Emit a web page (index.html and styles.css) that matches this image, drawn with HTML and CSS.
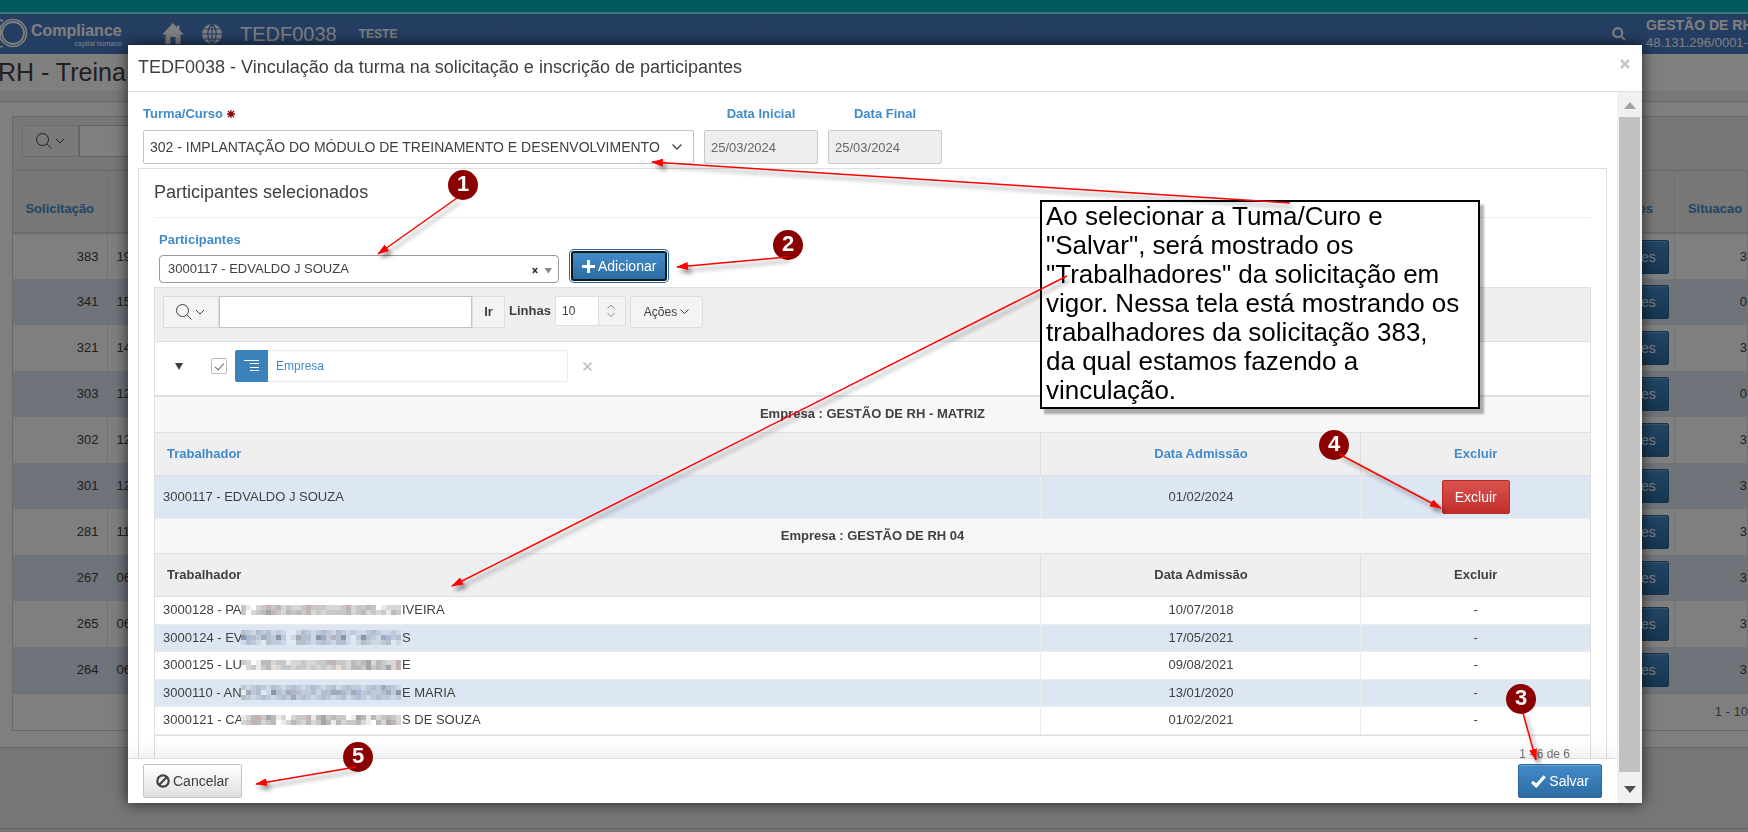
FILE: index.html
```html
<!DOCTYPE html>
<html lang="pt-BR">
<head>
<meta charset="utf-8">
<title>TEDF0038 - Vinculação da turma</title>
<link rel="stylesheet" href="styles.css">
</head>
<body>
<div class="page">
  <div class="strip"></div>
  <header class="nav">
    <div class="brand">
      <svg class="rings" width="28" height="32" viewBox="0 0 28 32" fill="none" stroke="#fff"><circle cx="13" cy="15" r="13.5" stroke-width="1.6"/><circle cx="13" cy="15" r="11" stroke-width="1.8"/><path d="M-1 2a15 15 0 0 1 4 1M-1 6c2 3 2 14 0 18M-1 29c1 0 3 0 4-1" stroke-width="1.6"/></svg>
      <span class="brand-text"><b>Compliance</b><small>capital humano</small></span>
    </div>
    <a href="#" class="nav-icon home" aria-label="Início"><svg width="22" height="22" viewBox="0 0 22 22" fill="#fff"><path d="M11 0 0 11.500h3.500V21h5v-7h5v7h5v-9.500H22L17.500 7V2.500h-2.500v2z"/></svg></a>
    <a href="#" class="nav-icon" aria-label="Idioma"><svg width="20" height="20" viewBox="0 0 20 20"><circle cx="10" cy="10" r="10" fill="#fff"/><path d="M0 10h20M1.500 5h17M1.500 15h17M10 0v20M10 0C4.500 4 4.500 16 10 20M10 0c5.500 4 5.500 16 0 20" fill="none" stroke="#4a7cc6" stroke-width="1.200"/></svg></a>
    <span class="nav-code">TEDF0038</span>
    <span class="nav-env">TESTE</span>
    <svg class="nav-search" width="14" height="14" viewBox="0 0 14 14" fill="none" stroke="#fff" stroke-width="2.200"><circle cx="5.700" cy="5.700" r="4.500"/><path d="m9 9 4 4"/></svg>
    <div class="nav-user"><b>GESTÃO DE RH</b><span>48.131.296/0001-00</span></div>
  </header>
  <h1 class="page-title">RH - Treina</h1>
  <div class="page-gap"></div>
  <section class="page-region">
    <div class="back">
      <div class="back-bar">
        <button class="find" type="button" aria-label="Pesquisar colunas"><svg width="30" height="17" viewBox="0 0 30 17" fill="none" stroke="#404040"><circle cx="6.500" cy="6.500" r="6"/><path d="m11 11 4.500 4.500M20 6l4 4 4-4"/></svg></button>
        <input class="find-text" type="text" aria-label="Pesquisa">
      </div>
      <table class="back-table">
        <colgroup><col class="b1"><col><col class="b3"><col class="b4"></colgroup>
        <thead><tr><th>Solicitação</th><th></th><th class="end">Trabalhadores</th><th class="state">Situacao</th></tr></thead>
        <tbody>
          <tr><td>383</td><td>19</td><td><button type="button" class="btn blue">Trabalhadores</button></td><td>3</td></tr>
          <tr><td>341</td><td>15</td><td><button type="button" class="btn blue">Trabalhadores</button></td><td>0</td></tr>
          <tr><td>321</td><td>14</td><td><button type="button" class="btn blue">Trabalhadores</button></td><td>3</td></tr>
          <tr><td>303</td><td>12</td><td><button type="button" class="btn blue">Trabalhadores</button></td><td>0</td></tr>
          <tr><td>302</td><td>12</td><td><button type="button" class="btn blue">Trabalhadores</button></td><td>3</td></tr>
          <tr><td>301</td><td>12</td><td><button type="button" class="btn blue">Trabalhadores</button></td><td>3</td></tr>
          <tr><td>281</td><td>11</td><td><button type="button" class="btn blue">Trabalhadores</button></td><td>3</td></tr>
          <tr><td>267</td><td>06</td><td><button type="button" class="btn blue">Trabalhadores</button></td><td>3</td></tr>
          <tr><td>265</td><td>06</td><td><button type="button" class="btn blue">Trabalhadores</button></td><td>3</td></tr>
          <tr><td>264</td><td>06</td><td><button type="button" class="btn blue">Trabalhadores</button></td><td>3</td></tr>
        </tbody>
      </table>
      <div class="back-pager">1 - 10</div>
    </div>
  </section>
  <footer class="page-foot"></footer>
</div>

<div class="overlay">
  <div class="modal" role="dialog" aria-labelledby="dlg-title">
    <div class="modal-head">
      <h2 id="dlg-title">TEDF0038 - Vinculação da turma na solicitação e inscrição de participantes</h2>
      <button class="close" type="button" aria-label="Fechar"><svg width="10" height="10" viewBox="0 0 10 10" stroke="#c8c8c8" stroke-width="2.600"><path d="m1 1 8 8M9 1 1 9"/></svg></button>
    </div>
    <div class="modal-main">
      <div class="modal-col">
        <div class="content">
          <div class="fields">
            <div class="field course">
              <label for="turma">Turma/Curso <svg width="8" height="8" viewBox="0 0 8 8" stroke="#8b0000" stroke-width="1.300"><path d="M4 0v8M0 4h8M1 1l6 6M7 1 1 7"/></svg></label>
              <div class="select-wrap">
                <select id="turma"><option>302 - IMPLANTAÇÃO DO MÓDULO DE TREINAMENTO E DESENVOLVIMENTO</option></select>
                <svg class="chev" width="10" height="6" viewBox="0 0 10 6" fill="none" stroke="#404040" stroke-width="1.300"><path d="m.5.5 4.500 4.500L9.500.5"/></svg>
              </div>
            </div>
            <div class="field date"><label for="di">Data Inicial</label><input id="di" type="text" value="25/03/2024" readonly></div>
            <div class="field date"><label for="df">Data Final</label><input id="df" type="text" value="25/03/2024" readonly></div>
          </div>
          <section class="region">
            <h3>Participantes selecionados</h3>
            <div class="adder">
              <div class="person">
                <label for="part">Participantes</label>
                <div class="select-wrap">
                  <select id="part"><option>3000117 - EDVALDO J SOUZA</option></select>
                  <svg class="marks" width="20" height="7" viewBox="0 0 20 7"><path d="m.8 1 4.400 5M5.200 1 .8 6" stroke="#333" stroke-width="1.600"/><path d="M12.500 1h7.500l-3.700 5.500z" fill="#888"/></svg>
                </div>
              </div>
              <button type="button" class="btn blue add"><svg width="13" height="13" viewBox="0 0 13 13" fill="#fff"><path d="M5 0h3v5h5v3H8v5H5V8H0V5h5z"/></svg>Adicionar</button>
            </div>
            <div class="report">
              <div class="toolbar">
                <button class="find" type="button" aria-label="Selecionar colunas"><svg width="30" height="17" viewBox="0 0 30 17" fill="none" stroke="#404040"><circle cx="6.500" cy="6.500" r="6"/><path d="m11 11 4.500 4.500M20 6l4 4 4-4"/></svg></button>
                <input class="find-text" type="text" aria-label="Pesquisar">
                <button class="go" type="button">Ir</button>
                <label class="lines" for="linhas">Linhas</label>
                <div class="select-wrap rows-sel">
                  <select id="linhas"><option>10</option></select>
                  <svg class="spin" width="27" height="28" viewBox="0 0 27 28" fill="none"><path d="M0 0h27v28H0z" fill="#f3f3f3"/><path d="M.5 0v28" stroke="#dfdfdf"/><path d="m9.500 11.500 3.500-3.500 3.500 3.500m-7 4.500 3.500 3.500 3.500-3.500" stroke="#888"/></svg>
                </div>
                <button class="actions" type="button">Ações<svg width="9" height="6" viewBox="0 0 9 6" fill="none" stroke="#404040"><path d="m.5.5 4 4 4-4"/></svg></button>
              </div>
              <div class="breaks">
                <svg class="tri" width="8" height="7" viewBox="0 0 8 7" fill="#404040"><path d="M0 0h8L4 7z"/></svg>
                <input type="checkbox" class="tick" checked aria-label="Ativar quebra">
                <div class="chip"><span class="chip-icon"><svg width="16" height="12" viewBox="0 0 16 12" stroke="#fff"><path d="M0 .5h15M6 3.500h9M6 7.500h9M6 10.500h9"/></svg></span><a href="#">Empresa</a></div>
                <button class="drop" type="button" aria-label="Remover"><svg width="9" height="9" viewBox="0 0 9 9" stroke="#c4c4c4" stroke-width="1.800"><path d="m.5.5 8 8m0-8-8 8"/></svg></button>
              </div>
              <table class="grid">
                <colgroup><col><col class="c2"><col class="c3"></colgroup>
                <tbody>
                  <tr class="group"><th colspan="3">Empresa : GESTÃO DE RH - MATRIZ</th></tr>
                  <tr class="head link"><th>Trabalhador</th><th>Data Admissão</th><th>Excluir</th></tr>
                  <tr class="tall alt"><td>3000117 - EDVALDO J SOUZA</td><td>01/02/2024</td><td><button type="button" class="btn red">Excluir</button></td></tr>
                  <tr class="group second"><th colspan="3">Empresa : GESTÃO DE RH 04</th></tr>
                  <tr class="head"><th>Trabalhador</th><th>Data Admissão</th><th>Excluir</th></tr>
                  <tr><td><span class="name"><span class="first">3000128 - PA</span><svg class="mask" data-rows="2"></svg>IVEIRA</span></td><td>10/07/2018</td><td>-</td></tr>
                  <tr class="alt"><td><span class="name"><span class="first">3000124 - EV</span><svg class="mask" data-rows="3"></svg>S</span></td><td>17/05/2021</td><td>-</td></tr>
                  <tr><td><span class="name"><span class="first">3000125 - LU</span><svg class="mask" data-rows="2"></svg>E</span></td><td>09/08/2021</td><td>-</td></tr>
                  <tr class="alt"><td><span class="name"><span class="first">3000110 - AN</span><svg class="mask" data-rows="3"></svg>E MARIA</span></td><td>13/01/2020</td><td>-</td></tr>
                  <tr><td><span class="name"><span class="first">3000121 - CA</span><svg class="mask" data-rows="2"></svg>S DE SOUZA</span></td><td>01/02/2021</td><td>-</td></tr>
                </tbody>
              </table>
              <div class="pager">1 - 6 de 6</div>
            </div>
          </section>
        </div>
        <div class="modal-foot">
          <button type="button" class="btn plain"><svg width="14" height="14" viewBox="0 0 14 14" fill="none" stroke="#404040" stroke-width="2.200"><circle cx="7" cy="7" r="5.700"/><path d="m3 11 8-8"/></svg>Cancelar</button>
          <button type="button" class="btn blue"><svg width="15" height="13" viewBox="0 0 15 13" fill="none" stroke="#fff" stroke-width="3.200"><path d="m1.200 6.800 4 4 8.500-9.500"/></svg>Salvar</button>
        </div>
      </div>
      <div class="scroll" aria-hidden="true">
        <svg width="12" height="7" viewBox="0 0 12 7"><path d="M0 7h12L6 0z" fill="#a3a3a3"/></svg>
        <span class="thumb"></span>
        <svg width="12" height="7" viewBox="0 0 12 7"><path d="M0 0h12L6 7z" fill="#505050"/></svg>
      </div>
    </div>
  </div>
</div>

<div class="notes">
  <p class="callout">Ao selecionar a Tuma/Curo e<br>"Salvar", será mostrado os<br>"Trabalhadores" da solicitação em<br>vigor. Nessa tela está mostrando os<br>trabalhadores da solicitação 383,<br>da qual estamos fazendo a<br>vinculação.</p>
  <span class="dot d1">1</span>
  <span class="dot d2">2</span>
  <span class="dot d3">3</span>
  <span class="dot d4">4</span>
  <span class="dot d5">5</span>
  <svg class="arrows" width="1748" height="832" viewBox="0 0 1748 832">
    <defs><marker id="tip" markerUnits="userSpaceOnUse" markerWidth="12" markerHeight="8" refX="11" refY="4" orient="auto"><path d="M0 0 12 4 0 8z" fill="#f00"/></marker></defs>
    <g stroke="#f00" stroke-width="1.500">
      <path d="M457 198 378 254" marker-end="url(#tip)"/>
      <path d="M787 257 677 267" marker-end="url(#tip)"/>
      <path d="M1523 713 1536 760" marker-end="url(#tip)"/>
      <path d="M1339 454 1441 508" marker-end="url(#tip)"/>
      <path d="M356 767 256 784" marker-end="url(#tip)"/>
      <path d="M1290 203 652 162" marker-end="url(#tip)"/>
      <path d="M1067 276 452 586" marker-end="url(#tip)"/>
    </g>
  </svg>
</div>
<script src="mask.js"></script>
</body>
</html>
```

FILE: styles.css
```css
* { box-sizing: border-box; }
html, body { height: 100%; }
body {
  margin: 0;
  overflow: hidden;
  font: 13px/18px "Liberation Sans", Arial, sans-serif;
  color: #404040;
  background: #eaecee;
}
button, input, select { font: inherit; color: inherit; margin: 0; }
a { color: #428bca; text-decoration: none; }
h1, h2, h3, p { margin: 0; font-weight: 400; }
label { font-weight: 700; color: #428bca; }

/* page behind the dialog */
.page { min-height: 100%; display: flex; flex-direction: column; }
.strip { height: 14px; background: #06b4bc; border-bottom: 2px solid #7cf4fa; }
.nav {
  height: 40px;
  display: flex;
  align-items: center;
  overflow: hidden;
  color: #fff;
  background: linear-gradient(#4a7cc4, #487ac4);
}
.brand { display: flex; gap: 3px; width: 162px; flex: none; }
.brand-text { display: flex; flex-direction: column; width: 91px; padding-top: 4px; font-size: 16px; line-height: 18px; }
.brand-text small { font-size: 7px; line-height: 7px; text-align: right; }
.nav-icon { display: flex; margin-right: 18px; }
.nav-code { font-size: 20px; margin-right: 22px; }
.nav-env { font-weight: 700; font-size: 12px; flex: 1; }
.nav-search { margin-right: 20px; }
.nav-user { width: 102px; display: flex; flex-direction: column; white-space: nowrap; line-height: 17px; }
.nav-user b { font-size: 14px; }
.page-title { height: 37px; padding: 2px 0 0; font-size: 25px; line-height: 32px; color: #404040; background: #fff; margin-left: -2px; }
.page-gap { height: 11px; background: #eff0f4; border-bottom: 1px solid #d0d0d0; }
.page-region { height: 646px; padding: 14px 0 0 12px; background: #fff; border-bottom: 1px solid #d4d4d4; }
.back { border: 1px solid #d4d4d4; border-right: 0; }
.back-bar { height: 54px; padding: 8px 9px; display: flex; background: #efefef; border-bottom: 1px solid #d4d4d4; }
.find { display: flex; align-items: center; justify-content: center; border: 1px solid #d9d9d9; background: #f4f4f4; padding: 0; border-radius: 2px 0 0 2px; }
.find-text { border: 1px solid #c4c4c4; background: #fff; height: 32px; padding: 0 8px; }
.back .find { width: 57px; height: 32px; }
.back .find-text { width: 250px; }
.back-table { width: 100%; table-layout: fixed; border-collapse: collapse; }
.b1 { width: 94px; }
.b3 { width: 130px; }
.b4 { width: 73px; }
.back-table th { height: 62px; padding: 15px 0 0; background: #efefef; color: #428bca; border-bottom: 2px solid #d4d4d4; border-right: 1px solid #dfdfdf; }
.back-table .end { text-align: right; padding-right: 21px; }
.back-table .state { padding-left: 8px; }
.back-table td { height: 46px; padding: 0 8px; border-right: 1px solid #e4e4e4; text-align: right; }
.back-table td:nth-child(2) { text-align: left; padding-left: 9px; }
.back-table td:last-child { padding-right: 0; }
.back-table tr:nth-child(even) td { background: #dee7f4; }
.back-pager { height: 37px; padding-top: 9px; text-align: right; color: #666; border-top: 1px solid #dfdfdf; }
.page-foot { margin-top: auto; height: 4px; background: #e4e4e4; border-top: 1px solid #cfcfcf; }

/* buttons */
.btn {
  display: inline-flex;
  align-items: center;
  gap: 3px;
  height: 34px;
  padding: 0 12px;
  font-size: 14px;
  border: 1px solid #2b669a;
  border-radius: 2px;
  white-space: nowrap;
}
.blue { color: #fff; background: linear-gradient(#428bca, #2d6ca2); box-shadow: inset 0 1px 0 #70a6d6; }
.red { color: #fff; border-color: #b92c28; background: linear-gradient(#d9534f, #c12e2a); }
.plain { border-color: #c4c4c4; background: linear-gradient(#fff, #e0e0e0); }
.back-table .btn { vertical-align: middle; }

/* dialog */
.overlay { position: fixed; inset: 0; padding: 45px 106px 29px 128px; background: rgba(0, 0, 0, .5); }
.modal { height: 100%; display: flex; flex-direction: column; background: #fff; box-shadow: 0 0 14px rgba(0, 0, 0, .7); }
.modal-head { flex: none; height: 47px; padding: 0 12px 0 10px; display: flex; justify-content: space-between; border-bottom: 1px solid #dfdfdf; }
.modal-head h2 { font-size: 18px; line-height: 44px; }
.close { display: flex; height: 10px; margin-top: 14px; padding: 0; border: 0; background: none; }
.modal-main { flex: 1; min-height: 0; display: flex; }
.modal-col { flex: 1; min-width: 0; display: flex; flex-direction: column; }
.content { flex: 1; min-height: 0; overflow: hidden; padding: 13px 10px 0; }
.fields { display: flex; gap: 10px; padding: 0 5px; }
.field { display: flex; flex-direction: column; gap: 7px; }
.course { width: 551px; }
.date { width: 114px; text-align: center; }
.select-wrap { position: relative; display: flex; }
.select-wrap select { flex: 1; min-width: 0; appearance: none; background: #fff; }
.course select { height: 34px; padding: 0 6px; font-size: 14px; border: 1px solid #c4c4c4; border-radius: 2px; }
.chev { position: absolute; right: 12px; top: 14px; }
.date input { width: 100%; height: 34px; padding: 0 6px; border: 1px solid #c8c8c8; border-radius: 2px; background: #eee; color: #666; }
.region { margin-top: 4px; border: 1px solid #dfdfdf; padding: 0 15px; }
.region h3 { height: 49px; font-size: 18px; line-height: 46px; border-bottom: 1px solid #ededed; }
.adder { display: flex; align-items: flex-end; gap: 12px; padding: 13px 5px 4px; }
.person { width: 400px; display: flex; flex-direction: column; gap: 6px; }
.person select { height: 28px; padding: 0 8px; border: 1px solid #999; border-radius: 4px; }
.marks { position: absolute; right: 7px; top: 12px; }
.add { height: 30px; margin-bottom: 2px; padding: 0 9px; border: 2px solid #101820; box-shadow: 0 0 0 1px #fff, 0 0 0 2px #2b669a; border-radius: 3px; }
.report { border: 1px solid #dfdfdf; }
.toolbar { height: 54px; padding: 8px; display: flex; background: #efefef; border-bottom: 1px solid #dfdfdf; }
.toolbar .find { width: 56px; height: 32px; }
.toolbar .find-text { width: 253px; }
.go { width: 33px; height: 32px; padding: 0; font-weight: 700; border: 1px solid #dfdfdf; background: #f4f4f4; }
.lines { width: 50px; padding-left: 4px; line-height: 30px; color: #404040; }
.rows-sel { width: 71px; height: 30px; }
.rows-sel select { padding: 0 6px; font-size: 12px; border: 1px solid #dfdfdf; }
.spin { position: absolute; right: 1px; top: 1px; }
.actions { display: flex; align-items: center; justify-content: center; gap: 3px; width: 73px; height: 32px; margin-left: 4px; padding: 0; font-size: 12px; border: 1px solid #dfdfdf; background: #f4f4f4; border-radius: 2px; }
.breaks { height: 55px; padding: 8px 20px; display: flex; align-items: flex-start; border-bottom: 2px solid #dfdfdf; }
.tri { margin: 13px 28px 0 0; }
.tick {
  appearance: none;
  width: 16px;
  height: 16px;
  margin: 8px 8px 0 0;
  border: 1px solid #bbb;
  border-radius: 2px;
  display: grid;
  place-items: center;
}
.tick:checked::after { content: ""; width: 4px; height: 8px; margin-bottom: 2px; border: solid #666; border-width: 0 1px 1px 0; transform: rotate(42deg); }
.chip { display: flex; width: 333px; height: 32px; border: 1px solid #ebebeb; border-left: 0; border-radius: 2px; font-size: 12px; line-height: 30px; }
.chip-icon { display: flex; align-items: center; justify-content: center; width: 33px; margin: -1px 8px -1px 0; background: #3b82bd; border-radius: 2px 0 0 2px; }
.drop { display: flex; margin: 12px 0 0 15px; padding: 0; border: 0; background: none; }
.grid { width: 100%; table-layout: fixed; border-collapse: collapse; }
.c2 { width: 320px; }
.c3 { width: 229px; }
.grid tr { height: 28px; }
.grid tr.alt { height: 27px; background: #dde7f3; }
.grid tr.tall { height: 43px; }
.grid tr.group { height: 35px; background: #f7f7f7; }
.grid tr.head { height: 43px; background: #efefef; }
.grid th, .grid td { padding: 0 8px; border: 1px solid #ececec; text-align: center; line-height: 16px; }
.grid th { padding: 0 12px; border-color: #dfdfdf; }
.grid tr > :first-child { border-left: 0; }
.grid tr > :last-child { border-right: 0; }
.grid tr:first-child th { border-top: 0; }
.grid td:first-child, .head th:first-child { text-align: left; }
.link th { color: #428bca; }
.grid .btn { vertical-align: middle; }
.name { display: flex; align-items: center; white-space: nowrap; }
.first { width: 78px; }
.mask { width: 160px; height: 15px; margin-right: 1px; }
.pager { height: 36px; padding: 9px 20px 0; text-align: right; font-size: 12px; color: #707070; border-top: 1px solid #dfdfdf; }
.modal-foot {
  position: relative;
  height: 45px;
  padding: 5px 15px 0;
  display: flex;
  justify-content: space-between;
  background: #fff;
  border-top: 1px solid #dfdfdf;
  box-shadow: 0 -6px 16px rgba(0, 0, 0, .07);
}
.scroll { position: relative; width: 25px; padding: 10px 2px; display: flex; flex-direction: column; align-items: center; gap: 8px; background: #f1f1f1; }
.scroll svg { flex: none; }
.thumb { flex: 1; width: 100%; margin-bottom: 6px; background: #c1c1c1; }

/* annotations drawn over the screen */
.notes { position: absolute; inset: 0; pointer-events: none; overflow: hidden; }
.arrows { position: absolute; left: 0; top: 0; filter: drop-shadow(3px 4px 2px rgba(0, 0, 0, .45)); }
.callout {
  position: absolute;
  left: 1040px;
  top: 200px;
  width: 440px;
  padding: 0 4px 2px;
  font-size: 26px;
  line-height: 29px;
  color: #000;
  background: #fff;
  border: 2px solid #000;
  box-shadow: 4px 5px 2px rgba(0, 0, 0, .3);
  white-space: nowrap;
}
.dot { position: absolute; width: 30px; height: 30px; border-radius: 50%; background: #8b0000; color: #fff; font-weight: 700; font-size: 22px; line-height: 28px; text-align: center; }
.d1 { left: 448px; top: 170px; }
.d2 { left: 773px; top: 230px; }
.d3 { left: 1506px; top: 684px; }
.d4 { left: 1319px; top: 430px; }
.d5 { left: 343px; top: 742px; }
```

FILE: mask.js
```javascript
// Paints the pixelated strip that hides part of each worker's name.
const shades = {
  white: { a: "#fdfdfd", b: "#eaeaea", c: "#d6d6d6", d: "#c8c8c8", e: "#bababc", f: "#a6a6aa", r: "#c6b2ae", g: "#c2c8c8", p: "#ecdcd6" },
  alt: { a: "#dfe8f3", b: "#ced8e4", c: "#bfcad8", d: "#b4bfce", e: "#a2abbb", f: "#8d96a6", r: "#b8b2bc", g: "#a5bbd6", p: "#c5cddc" }
};
const patterns = [
  ["gbacdrdecdccdrdddcccdrcddegabccc", "dacdefrdcegedrcdcddddecdecdcdbed"],
  ["dcbdcdbcbaabdcbcdcbdcbcbbcdcbbcb", "fgdcedcfcabeddbfecrdfbacfdcbegcd", "bdcbadccbaaddcbcdcbddbabdcbbcdab"],
  ["dcabeecgdbccdccdderddcedefcedccr", "acdbdepcggcddcdcdcdpdceedfdegfcr"],
  ["cbcdcbdcbcdcbcdcbcdbcdccbcdcedcbe".slice(0, 32), "aecdabfdcerdccdbddeegcegcdccdecf", "dcbcdcbcdcecdcbcdcbcdbcdcbcdccbc"],
  ["bcerdfebcacddrbefdeddabfebecgedc", "cdrecgeabcedcecdfebecddecbaecfrc"]
];
document.querySelectorAll(".mask").forEach((svg, n) => {
  const set = svg.closest("tr").classList.contains("alt") ? shades.alt : shades.white;
  const top = svg.dataset.rows === "2" ? 2 : 0;
  patterns[n].forEach((line, y) => [...line].forEach((key, x) => {
    const cell = document.createElementNS("http://www.w3.org/2000/svg", "rect");
    cell.setAttribute("x", x * 5);
    cell.setAttribute("y", top + y * 5);
    cell.setAttribute("width", 5);
    cell.setAttribute("height", 5);
    cell.setAttribute("fill", set[key]);
    svg.appendChild(cell);
  }));
});
```
